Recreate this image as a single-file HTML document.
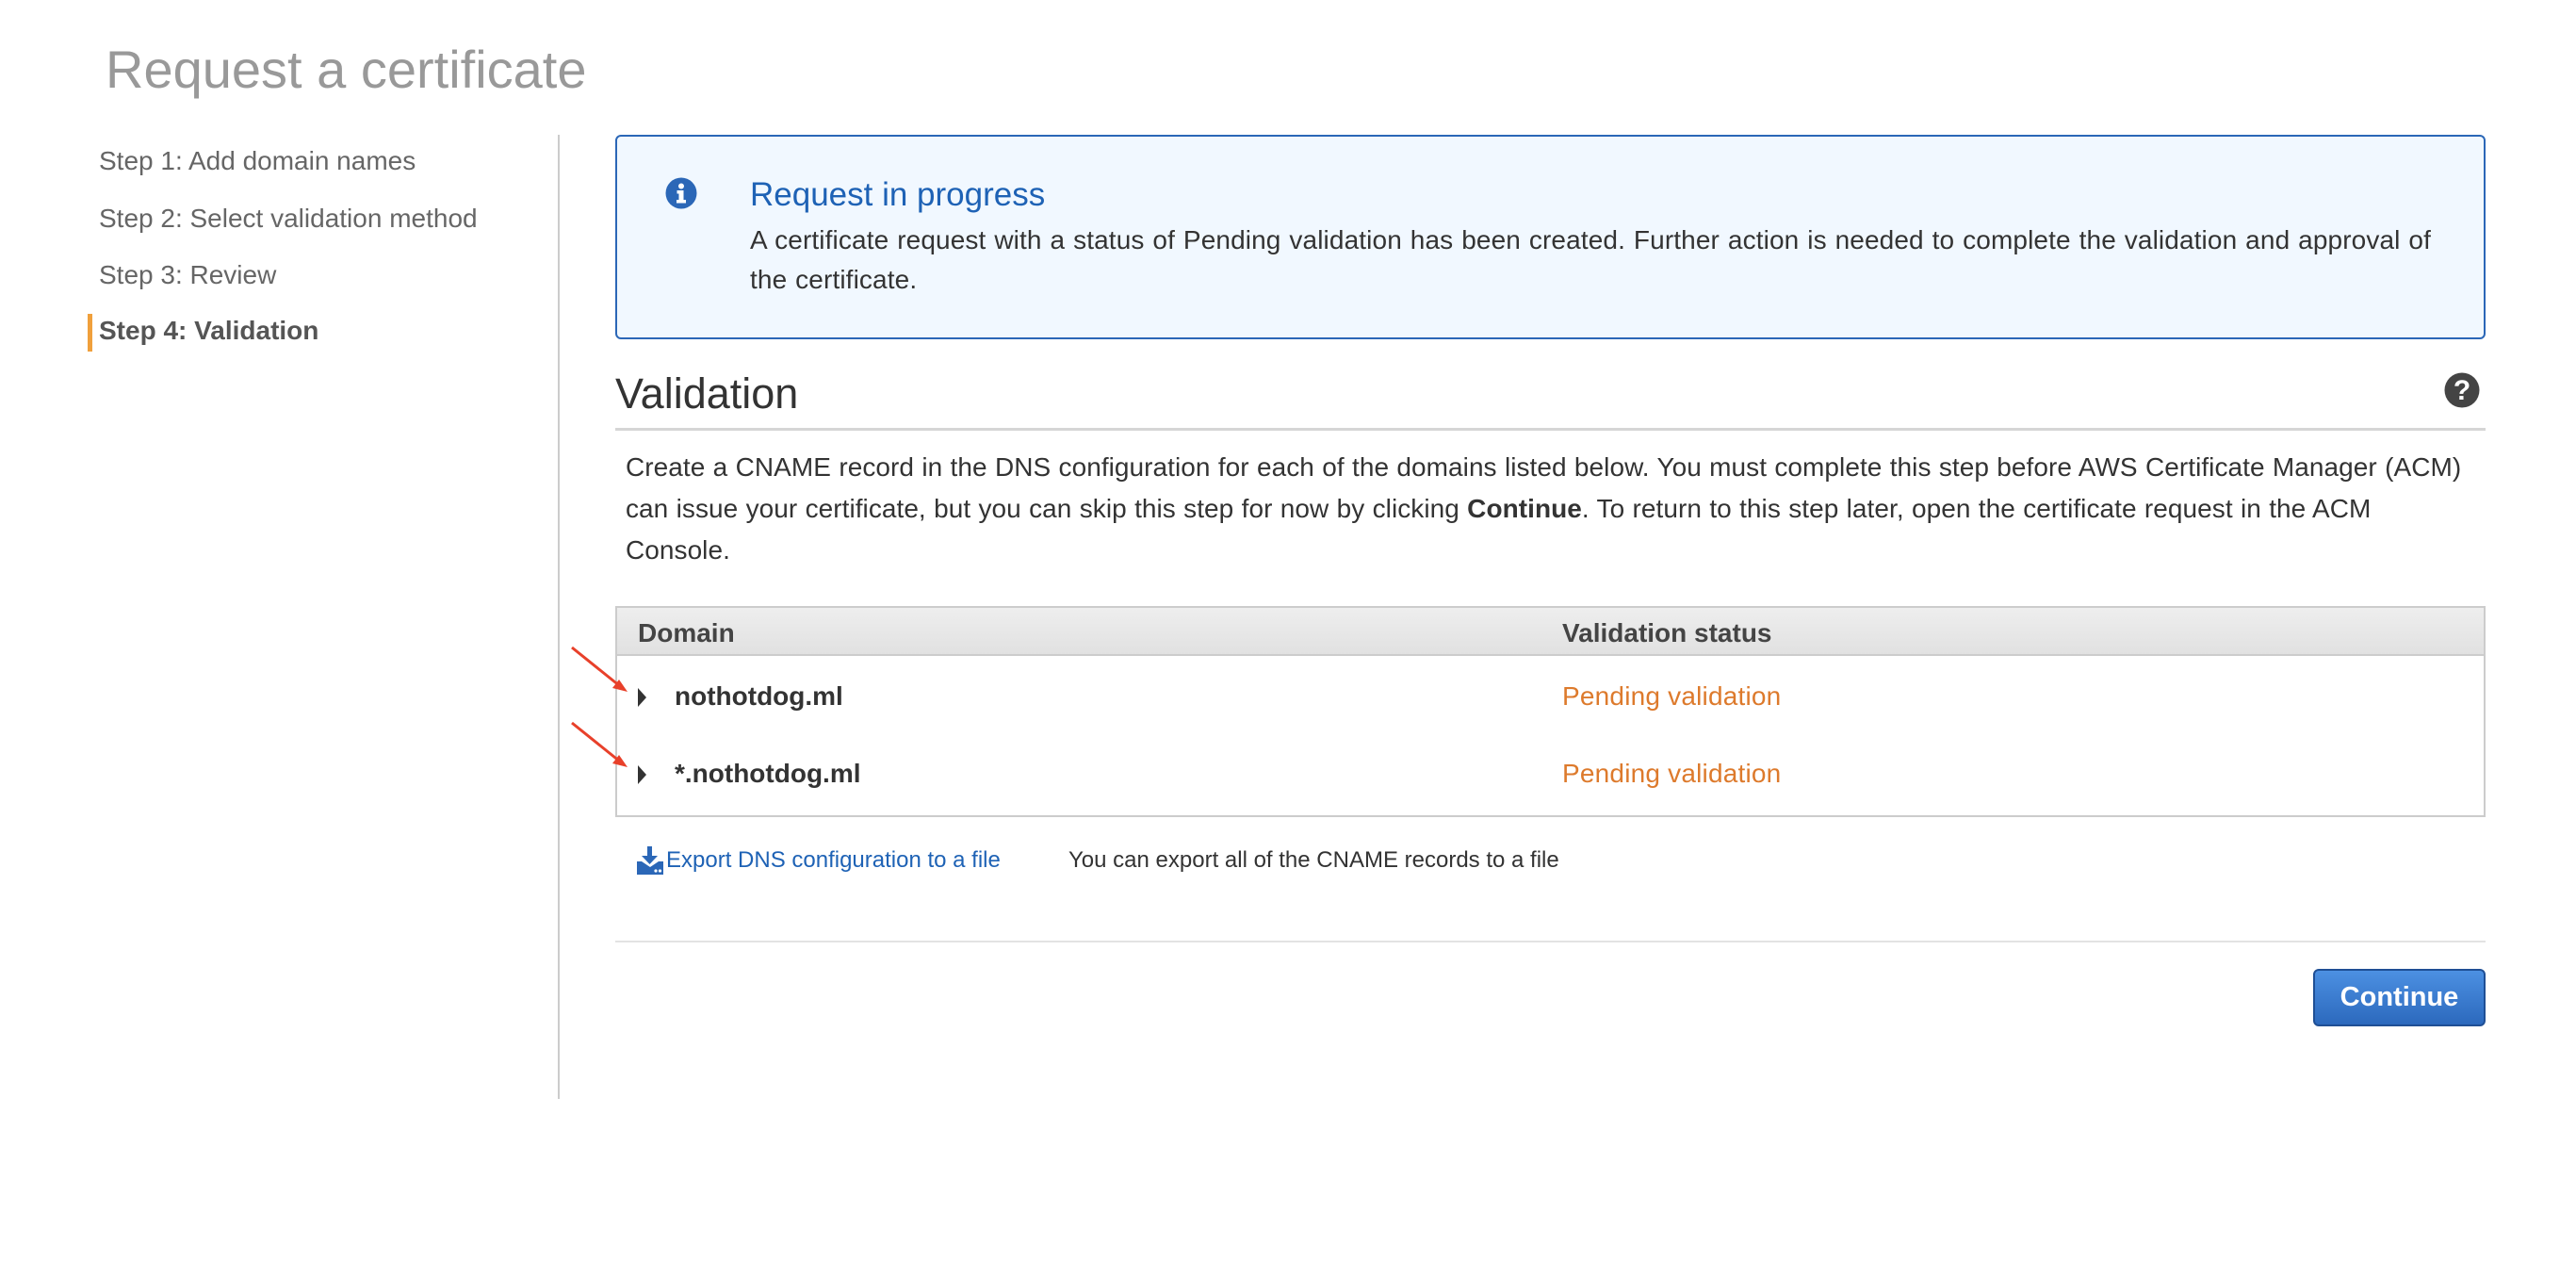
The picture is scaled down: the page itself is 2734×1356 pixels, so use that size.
<!DOCTYPE html>
<html><head><meta charset="utf-8"><style>
*{margin:0;padding:0;box-sizing:border-box}
body{width:2734px;height:1356px;background:#fff;font-family:"Liberation Sans",Arial,sans-serif;position:relative;overflow:hidden;color:#444}
.a{position:absolute;white-space:nowrap}
</style></head><body>
<div class="a" style="left:112px;top:41px;font-size:56px;color:#999;">Request a certificate</div>

<div class="a" style="left:105px;top:155px;font-size:28px;color:#666;">Step 1: Add domain names</div>
<div class="a" style="left:105px;top:216px;font-size:28px;color:#666;">Step 2: Select validation method</div>
<div class="a" style="left:105px;top:276px;font-size:28px;color:#666;">Step 3: Review</div>
<div class="a" style="left:93px;top:333px;width:5px;height:40px;background:#f0a03c;"></div>
<div class="a" style="left:105px;top:335px;font-size:28px;color:#555;font-weight:bold;">Step 4: Validation</div>
<div class="a" style="left:592px;top:143px;width:2px;height:1023px;background:#ccc;"></div>

<div class="a" style="left:653px;top:143px;width:1985px;height:217px;background:#f1f8ff;border:2px solid #2b67b7;border-radius:6px;"></div>
<svg class="a" style="left:706px;top:188px" width="34" height="34" viewBox="0 0 34 34"><circle cx="17" cy="17" r="16.5" fill="#2b67b7"/><circle cx="17" cy="9.5" r="3" fill="#fff"/><path d="M12.5 14h7v10h2.5v3.5h-10V24h2.5v-6.5h-2z" fill="#fff"/></svg>
<div class="a" style="left:796px;top:187px;font-size:35px;color:#1e62b5;">Request in progress</div>
<div class="a" style="left:796px;top:234px;font-size:28px;letter-spacing:0.12px;word-spacing:1px;color:#333;line-height:42px;">A certificate request with a status of Pending validation has been created. Further action is needed to complete the validation and approval of<br>the certificate.</div>

<div class="a" style="left:653px;top:392px;font-size:45px;color:#333;">Validation</div>
<svg class="a" style="left:2594px;top:395px" width="38" height="38" viewBox="0 0 38 38"><circle cx="19" cy="19" r="18.5" fill="#444"/><text x="19" y="29" text-anchor="middle" font-family="Liberation Sans" font-weight="bold" font-size="30" fill="#fff">?</text></svg>
<div class="a" style="left:653px;top:454px;width:1985px;height:3px;background:#d5d5d5;"></div>
<div class="a" style="left:664px;top:474px;font-size:28px;letter-spacing:0.05px;word-spacing:0.5px;color:#333;line-height:44px;">Create a CNAME record in the DNS configuration for each of the domains listed below. You must complete this step before AWS Certificate Manager (ACM)<br>can issue your certificate, but you can skip this step for now by clicking <b>Continue</b>. To return to this step later, open the certificate request in the ACM<br>Console.</div>

<div class="a" style="left:653px;top:643px;width:1985px;height:224px;border:2px solid #ccc;"></div>
<div class="a" style="left:655px;top:645px;width:1981px;height:51px;background:linear-gradient(#eeeeee,#e1e1e1);border-bottom:2px solid #ccc;"></div>
<div class="a" style="left:677px;top:656px;font-size:28px;font-weight:bold;color:#444;">Domain</div>
<div class="a" style="left:1658px;top:656px;font-size:28px;font-weight:bold;color:#444;">Validation status</div>
<svg class="a" style="left:677px;top:730px" width="10" height="20"><path d="M0 0L9 10L0 20z" fill="#333"/></svg>
<div class="a" style="left:716px;top:723px;font-size:28px;font-weight:bold;color:#333;">nothotdog.ml</div>
<div class="a" style="left:1658px;top:723px;font-size:28px;letter-spacing:0.2px;color:#dd7a2c;">Pending validation</div>
<svg class="a" style="left:677px;top:812px" width="10" height="20"><path d="M0 0L9 10L0 20z" fill="#333"/></svg>
<div class="a" style="left:716px;top:805px;font-size:28px;font-weight:bold;color:#333;">*.nothotdog.ml</div>
<div class="a" style="left:1658px;top:805px;font-size:28px;letter-spacing:0.2px;color:#dd7a2c;">Pending validation</div>

<svg class="a" style="left:600px;top:680px" width="80" height="160"><g stroke="#e8402a" stroke-width="3" fill="#e8402a"><line x1="7" y1="7" x2="58" y2="48"/><path d="M66 54L50 50L57 41z" stroke="none"/><line x1="7" y1="87" x2="58" y2="128"/><path d="M66 134L50 130L57 121z" stroke="none"/></g></svg>

<svg class="a" style="left:675px;top:898px" width="32" height="30" viewBox="0 0 32 30"><path d="M12 0h5v10h6l-8.5 9L6 10h6z" fill="#2b67b7"/><path d="M1 16h5l9 6 9-6h5v14H1z" fill="#2b67b7"/><circle cx="21" cy="26" r="1.6" fill="#fff"/><circle cx="25.5" cy="26" r="1.6" fill="#fff"/></svg>
<div class="a" style="left:707px;top:899px;font-size:24px;color:#1e62b5;">Export DNS configuration to a file</div>
<div class="a" style="left:1134px;top:899px;font-size:24px;color:#333;">You can export all of the CNAME records to a file</div>

<div class="a" style="left:653px;top:998px;width:1985px;height:2px;background:#e3e3e3;"></div>
<div class="a" style="left:2455px;top:1028px;width:183px;height:61px;border:2px solid #1f4f95;border-radius:6px;background:linear-gradient(#4c90e2,#2c69bd);color:#fff;font-weight:bold;font-size:29px;text-align:center;line-height:57px;">Continue</div>
</body></html>
